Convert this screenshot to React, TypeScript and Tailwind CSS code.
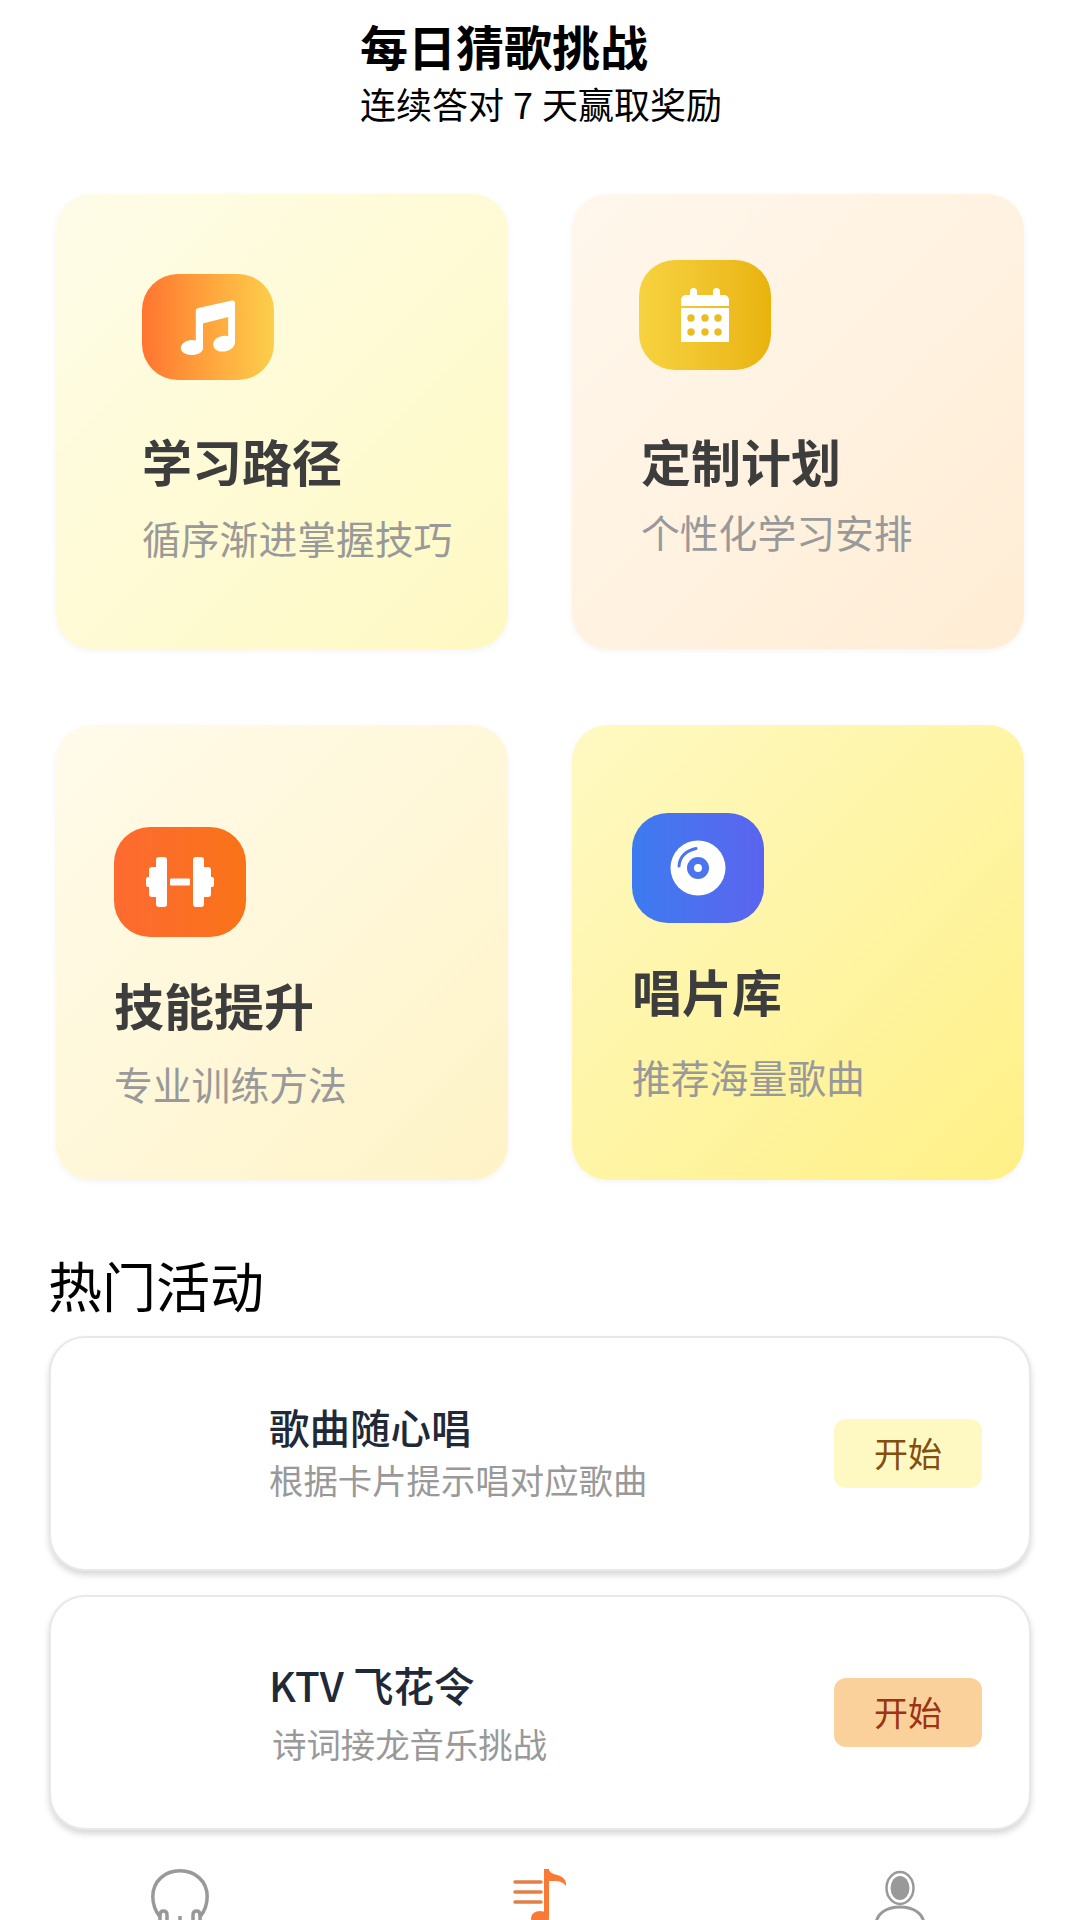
import React from "react";

const cjk = { fontFamily: '"Noto Sans CJK SC", "Noto Sans", sans-serif' };

function MusicIcon() {
  return (
    <svg viewBox="0 0 56 56" className="w-[56px] h-[56px]" fill="#fff">
      <path d="M52 1.500c1.500-.4 3 .6 3 2.200V43c0 5.400-5.600 9.600-12.200 9.600-5.600 0-9.600-3-9.600-7.200 0-5 5.400-8.600 11.400-8.600 1.300 0 2.600.2 3.600.5V18L23 24.500V49c0 4.800-5.600 7-11.600 7C5.800 56 .8 53 .8 49.500c0-5 5.400-8.500 11.200-8.500 1.500 0 2.800.2 3.800.5V12c0-1.400.9-2.600 2.300-3z" />
    </svg>
  );
}

function CalendarIcon({ dot }: { dot: string }) {
  const dots = [
    [10, 30], [24, 30], [37, 30],
    [10, 44], [24, 44], [37, 44],
  ];
  return (
    <svg viewBox="0 0 48 54" className="w-[48px] h-[54px]">
      <rect x="9" y="0" width="7" height="12" rx="3.500" fill="#fff" />
      <rect x="32" y="0" width="7" height="12" rx="3.500" fill="#fff" />
      <path d="M5 7h38a5 5 0 0 1 5 5v6H0v-6a5 5 0 0 1 5-5z" fill="#fff" />
      <rect x="0" y="20" width="48" height="34" fill="#fff" />
      {dots.map(([x, y]) => (
        <circle key={`${x}-${y}`} cx={x} cy={y} r="3.700" fill={dot} />
      ))}
    </svg>
  );
}

function DumbbellIcon() {
  return (
    <svg viewBox="0 0 68 50" className="w-[68px] h-[50px]" fill="#fff">
      <rect x="0" y="20" width="6" height="10" rx="2" />
      <rect x="3" y="10" width="10" height="30" rx="3" />
      <rect x="10" y="0" width="11" height="50" rx="3" />
      <rect x="24" y="21.500" width="20" height="7" rx="1" />
      <rect x="47" y="0" width="11" height="50" rx="3" />
      <rect x="55" y="10" width="10" height="30" rx="3" />
      <rect x="62" y="20" width="6" height="10" rx="2" />
    </svg>
  );
}

function DiscIcon() {
  return (
    <svg viewBox="0 0 56 56" className="w-[56px] h-[56px]">
      <circle cx="28" cy="28" r="27.500" fill="#fff" />
      <circle cx="28" cy="28" r="11" fill="#4b74ee" />
      <circle cx="28" cy="28" r="4" fill="#fff" />
      <path d="M9 26C9.500 17 16 10.500 26 8.500" fill="none" stroke="#4b74ee" strokeWidth="3" strokeLinecap="round" />
    </svg>
  );
}

function HeadphoneIcon() {
  return (
    <svg viewBox="0 0 58 60" className="w-[58px] h-[60px]" fill="none" stroke="#999" strokeWidth="3.500">
      <path d="M9 48C3.500 41 1.800 34 1.800 27.500 1.800 12 14 1.800 29 1.800S56.200 12 56.200 27.500c0 6.500-1.700 13.500-7.200 20.500" />
      <path d="M9 60V46c0-2.500 1.500-4 3.500-4s3.500 1.500 3.500 4v14" />
      <path d="M42 60V46c0-2.500 1.500-4 3.500-4s3.500 1.500 3.500 4v14" />
      <path d="M29 47v13" />
    </svg>
  );
}

function NoteListIcon() {
  return (
    <svg viewBox="0 0 54 60" className="w-[54px] h-[60px]">
      <g stroke="#e27f47" strokeWidth="3.500" strokeLinecap="round">
        <path d="M2 13h26M2 23h26M2 33h26" />
      </g>
      <path d="M31 0h5v48h-5z" fill="#f97a35" />
      <path d="M36 1c2 5 8 4 13 7 3 2 4.500 5 4 9-2-3-6-5-11-5h-6z" fill="#f97a35" />
      <ellipse cx="27" cy="49" rx="9" ry="7" fill="#f97a35" />
    </svg>
  );
}

function PersonIcon() {
  return (
    <svg viewBox="0 0 52 60" className="w-[52px] h-[60px]" fill="none">
      <ellipse cx="26" cy="19" rx="13.500" ry="16" stroke="#999" strokeWidth="2.500" />
      <ellipse cx="26" cy="19" rx="9.500" ry="12" fill="#999" />
      <path d="M2 60V56C2 45 12 38 26 38s24 7 24 18v4" stroke="#999" strokeWidth="3" />
    </svg>
  );
}

function Card({
  bg, iconBg, icon, title, desc, cardPad, iconGap, descGap,
}: {
  bg: string; iconBg: string; icon: React.ReactNode; title: string; desc: string;
  cardPad: string; iconGap: string; descGap: string;
}) {
  return (
    <div className={`h-[455px] rounded-[36px] shadow-[0_2px_6px_rgba(0,0,0,0.05)] flex flex-col items-start ${bg} ${cardPad}`}>
      <div className={`w-[132px] rounded-[36px] flex items-center justify-center ${iconBg}`}>{icon}</div>
      <div className={`text-[50px] leading-[60px] font-bold text-[#3d3d3d] ${iconGap}`}>{title}</div>
      <div className={`text-[38.800px] leading-[48px] text-[#999999] ${descGap}`}>{desc}</div>
    </div>
  );
}

function Activity({ title, desc, descClass, btn, btnText }: { title: string; desc: string; descClass: string; btn: string; btnText: string }) {
  return (
    <div className="h-[235px] rounded-[36px] bg-white border-2 border-[#e8e8e8] shadow-[0_4px_6px_rgba(0,0,0,0.16)] flex items-center pl-[218px] pr-[47px]">
      <div className="flex flex-col">
        <div className="text-[40.500px] leading-[50px] font-medium text-[#1f2937]">{title}</div>
        <div className={`text-[34.400px] leading-[44px] text-[#999999] ${descClass}`}>{desc}</div>
      </div>
      <div className={`ml-auto w-[148px] h-[69px] pb-[3px] rounded-[12px] flex items-center justify-center text-[34px] ${btn} ${btnText}`}>开始</div>
    </div>
  );
}

export default function App() {
  return (
    <div className="w-[1080px] h-[1920px] overflow-hidden bg-white text-black" style={cjk}>
      <div className="flex flex-col items-center pt-[12px]">
        <div className="w-[360px]">
          <div className="text-[48px] leading-[66px] font-bold">每日猜歌挑战</div>
          <div className="text-[36px] leading-[44px] mt-[3px] whitespace-nowrap [word-spacing:1px]">连续答对 7 天赢取奖励</div>
        </div>
      </div>

      <div className="grid grid-cols-2 gap-x-[64px] gap-y-[76px] px-[56px] mt-[69px]">
        <Card
          bg="bg-gradient-to-br from-yellow-50 to-yellow-100"
          iconBg="h-[106px] bg-gradient-to-r from-[#ff7430] to-[#fbcf4a]"
          icon={<MusicIcon />}
          title="学习路径"
          desc="循序渐进掌握技巧"
          cardPad="pl-[86px] pt-[80px]"
          iconGap="mt-[50px]"
          descGap="mt-[23px]"
        />
        <Card
          bg="bg-gradient-to-br from-orange-50 to-orange-100"
          iconBg="h-[110px] bg-gradient-to-r from-[#f7d33f] to-[#e9b30a]"
          icon={<CalendarIcon dot="#ecbb1e" />}
          title="定制计划"
          desc="个性化学习安排"
          cardPad="pl-[67px] pt-[66px]"
          iconGap="mt-[60px] ml-[2px]"
          descGap="mt-[17px] ml-[2px]"
        />
        <Card
          bg="bg-gradient-to-br from-amber-50 to-amber-100"
          iconBg="h-[110px] bg-gradient-to-r from-[#fe6a30] to-[#f97316]"
          icon={<DumbbellIcon />}
          title="技能提升"
          desc="专业训练方法"
          cardPad="pl-[58px] pt-[102px]"
          iconGap="mt-[37px]"
          descGap="mt-[25px]"
        />
        <Card
          bg="bg-gradient-to-br from-yellow-100 to-yellow-200"
          iconBg="h-[110px] bg-gradient-to-r from-[#3b7bf0] to-[#5a64ee]"
          icon={<DiscIcon />}
          title="唱片库"
          desc="推荐海量歌曲"
          cardPad="pl-[60px] pt-[88px]"
          iconGap="mt-[37px]"
          descGap="mt-[32px]"
        />
      </div>

      <div className="px-[49px] mt-[68px]">
        <div className="text-[54px] leading-[74px] -ml-[1px]">热门活动</div>
        <div className="flex flex-col gap-[24px] mt-[14px]">
          <Activity
            title="歌曲随心唱"
            desc="根据卡片提示唱对应歌曲"
            descClass="mt-[5px] mb-[5px]"
            btn="bg-yellow-100"
            btnText="text-[#854d0e]"
          />
          <Activity
            title="KTV 飞花令"
            desc="诗词接龙音乐挑战"
            descClass="ml-[3px] mt-[11px]"
            btn="bg-[#fad19b]"
            btnText="text-[#9a3412]"
          />
        </div>
      </div>

      <div className="grid grid-cols-3 pt-[39px]">
        <div className="flex justify-center"><HeadphoneIcon /></div>
        <div className="flex justify-center"><NoteListIcon /></div>
        <div className="flex justify-center"><PersonIcon /></div>
      </div>
    </div>
  );
}
